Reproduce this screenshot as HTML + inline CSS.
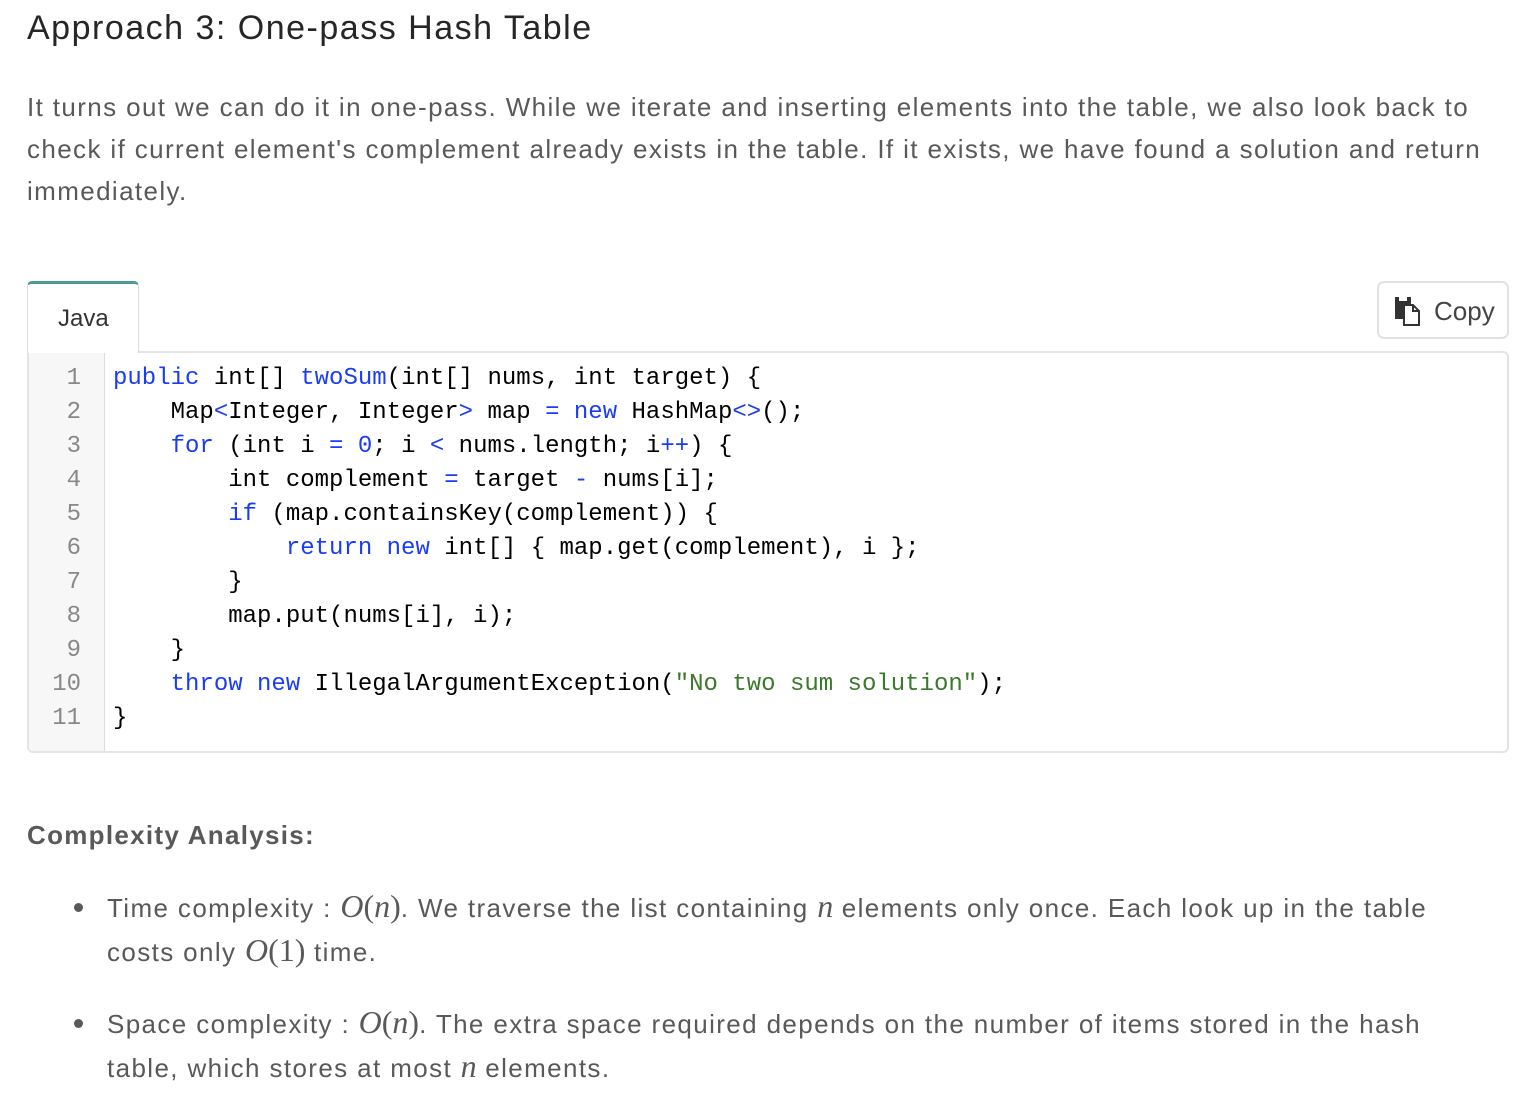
<!DOCTYPE html>
<html><head><meta charset="utf-8"><style>
body{margin:0;background:#fff;width:1540px;height:1106px;overflow:hidden;font-family:"Liberation Sans",sans-serif;color:#595959;}
.l{position:absolute;white-space:nowrap;}
h1{position:absolute;left:27px;top:9px;margin:0;font-weight:normal;font-size:34px;color:#262626;white-space:nowrap;letter-spacing:1.5px;}
.p{font-size:26px;letter-spacing:1.38px;}
.m{font-family:"Liberation Serif",serif;font-style:italic;font-size:32px;letter-spacing:0;}
.r{font-family:"Liberation Serif",serif;font-size:32px;letter-spacing:0;}
.tab{position:absolute;left:27px;top:281px;width:112px;height:72px;border:1px solid #ddd;border-bottom:none;border-top:3px solid #4a9a96;border-radius:5px 5px 0 0;background:#fff;z-index:2;box-sizing:border-box;}
.tab span{position:absolute;left:30px;top:21px;font-size:24px;color:#333;}
.copy{position:absolute;left:1377px;top:281px;width:132px;height:58px;border:2px solid #e2e2e2;border-radius:7px;box-sizing:border-box;}
.copy span{position:absolute;left:55px;top:13px;font-size:26px;color:#444;}
.code{position:absolute;left:27px;top:351px;width:1482px;height:402px;border:2px solid #e4e4e4;border-radius:0 6px 6px 6px;box-sizing:border-box;overflow:hidden;}
.gut{position:absolute;left:0;top:0;width:75px;height:100%;background:#f7f7f7;border-right:1px solid #ddd;}
pre{margin:0;position:absolute;top:9px;font-family:"Liberation Mono",monospace;font-size:24px;line-height:34px;}
.n{left:0;width:52px;text-align:right;color:#888;}
.c{left:84px;color:#000;}
.k{color:#1a3cf5}.s{color:#3b7a2a}
.dot{position:absolute;width:9px;height:9px;border-radius:50%;background:#595959;}
</style></head><body>
<h1>Approach 3: One-pass Hash Table</h1>
<div class="l p" style="left:27px;top:92px">It turns out we can do it in one-pass. While we iterate and inserting elements into the table, we also look back to</div>
<div class="l p" style="left:27px;top:134px">check if current element's complement already exists in the table. If it exists, we have found a solution and return</div>
<div class="l p" style="left:27px;top:176px">immediately.</div>
<div class="tab"><span>Java</span></div>
<div class="copy"><svg style="position:absolute;left:15px;top:13px" width="28" height="30" viewBox="0 0 28 30"><rect x="1" y="1" width="16" height="22" fill="#333"/><rect x="5" y="1" width="8" height="4" fill="#fff"/><path d="M10 9h9l6 6v14H10z" fill="#fff" stroke="#333" stroke-width="2"/><path d="M19 9v6h6" fill="none" stroke="#333" stroke-width="2"/></svg><span>Copy</span></div>
<div class="code"><div class="gut"></div>
<pre class="n">1
2
3
4
5
6
7
8
9
10
11</pre>
<pre class="c"><span class="k">public</span> int[] <span class="k">twoSum</span>(int[] nums, int target) {
    Map<span class="k">&lt;</span>Integer, Integer<span class="k">&gt;</span> map <span class="k">=</span> <span class="k">new</span> HashMap<span class="k">&lt;&gt;</span>();
    <span class="k">for</span> (int i <span class="k">=</span> <span class="k">0</span>; i <span class="k">&lt;</span> nums.length; i<span class="k">++</span>) {
        int complement <span class="k">=</span> target <span class="k">-</span> nums[i];
        <span class="k">if</span> (map.containsKey(complement)) {
            <span class="k">return</span> <span class="k">new</span> int[] { map.get(complement), i };
        }
        map.put(nums[i], i);
    }
    <span class="k">throw</span> <span class="k">new</span> IllegalArgumentException(<span class="s">"No two sum solution"</span>);
}</pre></div>
<div class="l" style="left:27px;top:820px;font-size:26px;font-weight:bold;letter-spacing:1.3px">Complexity Analysis:</div>
<div class="dot" style="left:74px;top:903px"></div>
<div class="l p" style="left:107px;top:888px">Time complexity : <span class="m">O</span><span class="r">(</span><span class="m">n</span><span class="r">)</span>. We traverse the list containing <span class="m">n</span> elements only once. Each look up in the table</div>
<div class="l p" style="left:107px;top:932px">costs only <span class="m">O</span><span class="r">(1)</span> time.</div>
<div class="dot" style="left:74px;top:1019px"></div>
<div class="l p" style="left:107px;top:1004px">Space complexity : <span class="m">O</span><span class="r">(</span><span class="m">n</span><span class="r">)</span>. The extra space required depends on the number of items stored in the hash</div>
<div class="l p" style="left:107px;top:1048px">table, which stores at most <span class="m">n</span> elements.</div>
</body></html>
